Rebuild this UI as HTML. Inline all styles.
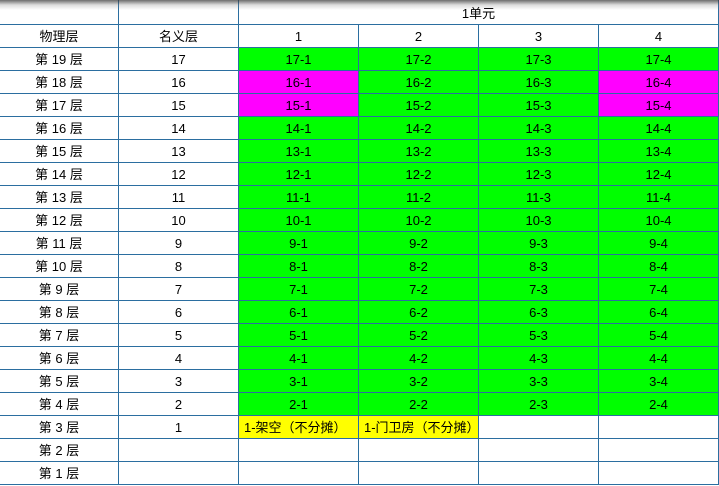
<!DOCTYPE html>
<html><head><meta charset="utf-8"><style>
html,body{margin:0;padding:0;background:#fff;width:719px;height:486px;overflow:hidden}
body{position:relative;font-family:"Liberation Sans","Noto Sans CJK SC",sans-serif;font-size:13px;color:#000}
table{position:absolute;left:0;top:0;border-collapse:separate;border-spacing:0;table-layout:fixed;width:719px}
td{box-sizing:border-box;border-right:1px solid #2b6ea0;border-bottom:1px solid #2b6ea0;height:23px;padding:0;padding-top:1px;text-align:center;vertical-align:middle;white-space:nowrap;overflow:hidden;line-height:20px}
tr.h td{height:25px;padding-top:3px}
.g{background:#00ff00}.m{background:#ff00ff}.y{background:#ffff00;text-align:left;padding-left:5px}
.sh{position:absolute;left:0;top:0;width:719px;height:10px;background:linear-gradient(to bottom,rgba(60,60,60,.75),rgba(120,120,120,.25) 50%,rgba(255,255,255,0));pointer-events:none}
</style></head><body>
<table>
<colgroup><col style="width:119px"><col style="width:120px"><col style="width:120px"><col style="width:120px"><col style="width:120px"><col style="width:120px"></colgroup>
<tr class="h"><td></td><td></td><td colspan="4">1单元</td></tr>
<tr><td>物理层</td><td>名义层</td><td>1</td><td>2</td><td>3</td><td>4</td></tr>
<tr><td>第 19 层</td><td>17</td><td class="g">17-1</td><td class="g">17-2</td><td class="g">17-3</td><td class="g">17-4</td></tr>
<tr><td>第 18 层</td><td>16</td><td class="m">16-1</td><td class="g">16-2</td><td class="g">16-3</td><td class="m">16-4</td></tr>
<tr><td>第 17 层</td><td>15</td><td class="m">15-1</td><td class="g">15-2</td><td class="g">15-3</td><td class="m">15-4</td></tr>
<tr><td>第 16 层</td><td>14</td><td class="g">14-1</td><td class="g">14-2</td><td class="g">14-3</td><td class="g">14-4</td></tr>
<tr><td>第 15 层</td><td>13</td><td class="g">13-1</td><td class="g">13-2</td><td class="g">13-3</td><td class="g">13-4</td></tr>
<tr><td>第 14 层</td><td>12</td><td class="g">12-1</td><td class="g">12-2</td><td class="g">12-3</td><td class="g">12-4</td></tr>
<tr><td>第 13 层</td><td>11</td><td class="g">11-1</td><td class="g">11-2</td><td class="g">11-3</td><td class="g">11-4</td></tr>
<tr><td>第 12 层</td><td>10</td><td class="g">10-1</td><td class="g">10-2</td><td class="g">10-3</td><td class="g">10-4</td></tr>
<tr><td>第 11 层</td><td>9</td><td class="g">9-1</td><td class="g">9-2</td><td class="g">9-3</td><td class="g">9-4</td></tr>
<tr><td>第 10 层</td><td>8</td><td class="g">8-1</td><td class="g">8-2</td><td class="g">8-3</td><td class="g">8-4</td></tr>
<tr><td>第 9 层</td><td>7</td><td class="g">7-1</td><td class="g">7-2</td><td class="g">7-3</td><td class="g">7-4</td></tr>
<tr><td>第 8 层</td><td>6</td><td class="g">6-1</td><td class="g">6-2</td><td class="g">6-3</td><td class="g">6-4</td></tr>
<tr><td>第 7 层</td><td>5</td><td class="g">5-1</td><td class="g">5-2</td><td class="g">5-3</td><td class="g">5-4</td></tr>
<tr><td>第 6 层</td><td>4</td><td class="g">4-1</td><td class="g">4-2</td><td class="g">4-3</td><td class="g">4-4</td></tr>
<tr><td>第 5 层</td><td>3</td><td class="g">3-1</td><td class="g">3-2</td><td class="g">3-3</td><td class="g">3-4</td></tr>
<tr><td>第 4 层</td><td>2</td><td class="g">2-1</td><td class="g">2-2</td><td class="g">2-3</td><td class="g">2-4</td></tr>
<tr><td>第 3 层</td><td>1</td><td class="y">1-架空（不分摊）</td><td class="y">1-门卫房（不分摊）</td><td></td><td></td></tr>
<tr><td>第 2 层</td><td></td><td></td><td></td><td></td><td></td></tr>
<tr><td>第 1 层</td><td></td><td></td><td></td><td></td><td></td></tr>
</table>
<div class="sh"></div>
</body></html>
